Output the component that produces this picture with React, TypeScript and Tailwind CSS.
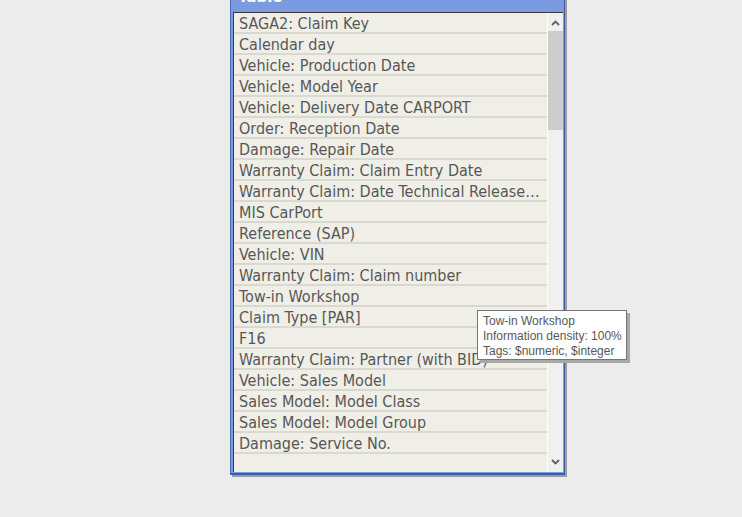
import React from 'react';

const ROWS = [
  'SAGA2: Claim Key',
  'Calendar day',
  'Vehicle: Production Date',
  'Vehicle: Model Year',
  'Vehicle: Delivery Date CARPORT',
  'Order: Reception Date',
  'Damage: Repair Date',
  'Warranty Claim: Claim Entry Date',
  'Warranty Claim: Date Technical Release of Claim',
  'MIS CarPort',
  'Reference (SAP)',
  'Vehicle: VIN',
  'Warranty Claim: Claim number',
  'Tow-in Workshop',
  'Claim Type [PAR]',
  'F16',
  'Warranty Claim: Partner (with BID)',
  'Vehicle: Sales Model',
  'Sales Model: Model Class',
  'Sales Model: Model Group',
  'Damage: Service No.',
  '',
];

function Chevron({ up }: { up?: boolean }) {
  return (
    <svg width="9" height="6" viewBox="0 0 9 6" className="block">
      <path d={up ? 'M1 5 L4.5 1.5 L8 5' : 'M1 1 L4.5 4.5 L8 1'} fill="none" stroke="#606060" strokeWidth="1.8" />
    </svg>
  );
}

export default function App() {
  return (
    <div className="relative w-[742px] h-[517px] bg-[#ececec] overflow-hidden">
      {/* window */}
      <div className="absolute left-[230px] top-[-16px] w-[335px] bg-[#7b9be0] border-l border-l-[#4d6bb5] border-r border-r-[#3f5ca6] border-b-2 border-b-[#3f5ca6] shadow-[2px_2px_0_#9c9c9c] pl-[2px] pr-px pb-px">
        <div className="h-[28px] pl-[5px] pt-[4px] text-white font-bold text-[15px] leading-[18px]" style={{ fontFamily: 'Tahoma, "DejaVu Sans", sans-serif' }}>
          Table
        </div>
        <div className="flex h-[460px] border-t border-l border-[#3a3a3a] bg-[#f0efe7]">
          <div className="flex-1 min-w-0 overflow-hidden border-r border-white">
            {ROWS.map((r, i) => (
              <div
                key={i}
                className="h-[21px] pl-[5px] pr-[6px] pt-[2px] border-b-2 border-[#d9d9d1] text-[16px] leading-[17px] text-[#575757] whitespace-nowrap overflow-hidden text-ellipsis"
                style={{ fontFamily: '"DejaVu Sans Condensed", "DejaVu Sans", sans-serif' }}
              >
                {r}
              </div>
            ))}
          </div>
          <div className="w-[15px] flex flex-col bg-[#f0f0f0]">
            <div className="h-[18px] flex items-center justify-center pt-[2px]">
              <Chevron up />
            </div>
            <div className="h-[99px] bg-[#cdcdcd]" />
            <div className="flex-1" />
            <div className="h-[18px] flex items-center justify-center pb-[2px]">
              <Chevron />
            </div>
          </div>
        </div>
      </div>

      {/* tooltip */}
      <div
        className="absolute left-[477px] top-[310px] w-[150px] h-[50px] bg-white border border-[#767676] shadow-[3px_3px_0_#a8a8a8] pl-[5px] pt-[3px] text-[12px] leading-[15px] text-[#575757] whitespace-nowrap"
        style={{ fontFamily: '"Liberation Sans", Arial, sans-serif' }}
      >
        <div>Tow-in Workshop</div>
        <div>Information density: 100%</div>
        <div>Tags: $numeric, $integer</div>
      </div>
    </div>
  );
}
